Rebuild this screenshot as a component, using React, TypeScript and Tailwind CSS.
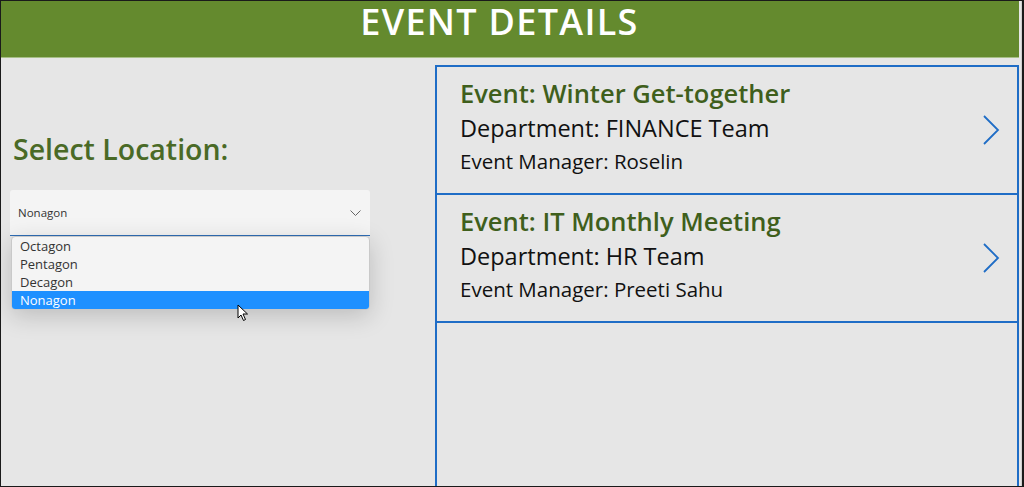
import React from 'react';

const LOCATIONS = ['Octagon', 'Pentagon', 'Decagon', 'Nonagon'];

const EVENTS = [
  { title: 'Winter Get-together', dept: 'FINANCE Team', manager: 'Roselin' },
  { title: 'IT Monthly Meeting', dept: 'HR Team', manager: 'Preeti Sahu' },
];

function Chevron() {
  return (
    <svg width="18" height="32" viewBox="0 0 18 32" fill="none">
      <path d="M2 2 L16 16 L2 30" stroke="#1f6dc6" strokeWidth="1.8" />
    </svg>
  );
}

function Cursor() {
  return (
    <svg width="12" height="18" viewBox="0 0 12 18" className="absolute left-[236px] top-[303px]">
      <path d="M1 1 L1 14 L4 11 L6.5 16.5 L8.5 15.5 L6 10 L10.5 10 Z" fill="#fff" stroke="#000" strokeWidth="1" strokeLinejoin="round" />
    </svg>
  );
}

export default function App() {
  return (
    <div className="w-[1024px] h-[487px] bg-[#1a1a1a] pt-[1px] pl-[1px] pb-[1px] pr-[2px] font-['Open_Sans',sans-serif]">
      <div className="relative w-full h-full bg-[#e6e6e6] flex flex-col pr-[2px] border-r border-[#cfcfcf]">
        {/* header */}
        <header className="h-[57px] shrink-0 bg-[#648a2e] border-b border-[#a7bf86] flex justify-center pt-[2px] pr-[21px]">
          <h1 className="text-white text-[36px] leading-[38px] tracking-[1.3px] font-semibold">EVENT DETAILS</h1>
        </header>

        <div className="flex flex-1 min-h-0 pt-[7px]">
          {/* left: location picker */}
          <div className="w-[434px] shrink-0 pl-[9px] pt-[67px]">
            <p className="pl-[3px] text-[28.5px] leading-[34px] font-semibold text-[#4a6a26]">Select Location:</p>
            <div className="mt-[24px] w-[360px] h-[46px] bg-[#f4f4f4] rounded-t-[3px] border-b border-[#2f6db5] flex items-center justify-between pl-[8px] pr-[9px]">
              <span className="text-[11.5px] text-[#333]">Nonagon</span>
              <svg width="11" height="6" viewBox="0 0 11 6" fill="none">
                <path d="M0.5 0.5 L5.5 5.5 L10.5 0.5" stroke="#666" strokeWidth="1" />
              </svg>
            </div>
            <ul className="ml-[1px] w-[359px] bg-[#f4f4f4] border border-[#c9c9c9] rounded-[4px] overflow-hidden shadow-[0_6px_24px_rgba(0,0,0,0.18)]">
              {LOCATIONS.map(l => (
                <li
                  key={l}
                  className={
                    l === 'Nonagon'
                      ? 'h-[18px] pl-[8px] text-[13px] leading-[18px] bg-[#1e90ff] text-white'
                      : 'h-[18px] pl-[8px] text-[13px] leading-[18px] text-[#333]'
                  }
                >
                  {l}
                </li>
              ))}
            </ul>
          </div>

          {/* right: gallery */}
          <div className="flex-1 border-2 border-b-0 border-[#1f6dc6]">
            {EVENTS.map(e => (
              <div key={e.title} className="h-[128px] border-b-2 border-[#1f6dc6] flex items-center justify-between pl-[23px] pr-[17px]">
                <div className="self-start pt-[10px] flex flex-col">
                  <span className="text-[25.5px] leading-[32px] font-semibold text-[#3f5f1c]">Event: {e.title}</span>
                  <span className="text-[23.5px] leading-[38px] text-[#111]">Department: {e.dept}</span>
                  <span className="text-[20.5px] leading-[28px] text-[#111]">Event Manager: {e.manager}</span>
                </div>
                <Chevron />
              </div>
            ))}
          </div>
        </div>
        <Cursor />
      </div>
    </div>
  );
}
